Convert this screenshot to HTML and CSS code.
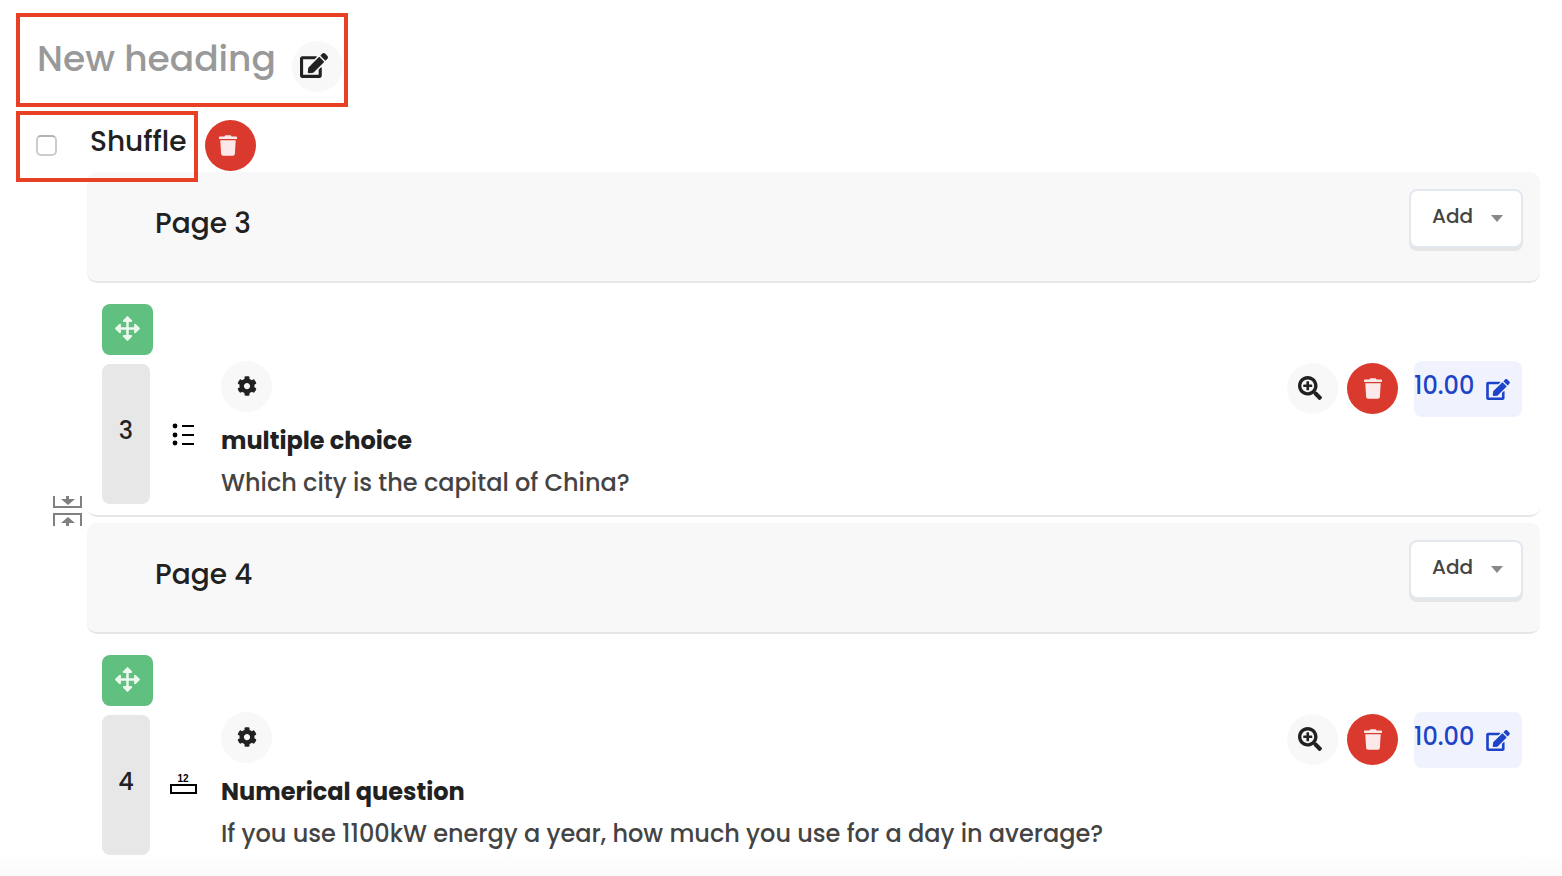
FILE: index.html
```html
<!DOCTYPE html>
<html lang="en">
  <head>
    <meta charset="UTF-8" />
    <meta name="viewport" content="width=device-width, initial-scale=1.0" />
    <title>Edit quiz</title>
    <link rel="stylesheet" href="styles.css">
  </head>
  <body>
    <!-- icon set -->
    <svg class="sprite" aria-hidden="true">
      <symbol id="edit" viewBox="0 0 576 512">
        <path d="M402.6 83.2l90.2 90.2c3.8 3.8 3.8 10 0 13.8L274.4 405.6l-92.8 10.3c-12.4 1.4-22.9-9.1-21.5-21.5l10.3-92.8L388.8 83.2c3.8-3.8 10-3.8 13.8 0zm162-22.9l-48.8-48.8c-15.2-15.2-39.9-15.2-55.2 0l-35.4 35.4c-3.8 3.8-3.8 10 0 13.8l90.2 90.2c3.8 3.8 10 3.8 13.8 0l35.4-35.4c15.2-15.3 15.2-40 0-55.2zM384 346.2V448H64V128h229.8c3.2 0 6.2-1.3 8.5-3.5l40-40c7.6-7.6 2.2-20.5-8.5-20.5H48C21.5 64 0 85.5 0 112v352c0 26.5 21.5 48 48 48h352c26.5 0 48-21.5 48-48V306.2c0-10.7-12.9-16-20.5-8.5l-40 40c-2.2 2.3-3.5 5.3-3.5 8.5z" />
      </symbol>
      <symbol id="zoom" viewBox="0 0 512 512">
        <path d="M304 192v32c0 6.6-5.4 12-12 12h-56v56c0 6.6-5.4 12-12 12h-32c-6.6 0-12-5.4-12-12v-56h-56c-6.6 0-12-5.4-12-12v-32c0-6.6 5.4-12 12-12h56v-56c0-6.6 5.4-12 12-12h32c6.6 0 12 5.4 12 12v56h56c6.6 0 12 5.4 12 12zm201 284.7L476.7 505c-9.4 9.4-24.6 9.4-33.9 0L343 405.3c-4.5-4.5-7-10.6-7-17V372c-35.3 27.6-79.7 44-128 44C93.1 416 0 322.9 0 208S93.1 0 208 0s208 93.1 208 208c0 48.3-16.4 92.7-44 128h16.3c6.4 0 12.5 2.5 17 7l99.7 99.7c9.3 9.4 9.3 24.6 0 34zM344 208c0-75.2-60.8-136-136-136S72 132.8 72 208s60.8 136 136 136 136-60.8 136-136z" />
      </symbol>
      <symbol id="trash" viewBox="0 0 448 512">
        <path d="M432 32H312l-9.4-18.7A24 24 0 0 0 281.1 0H166.8a23.72 23.72 0 0 0-21.4 13.3L136 32H16A16 16 0 0 0 0 48v32a16 16 0 0 0 16 16h416a16 16 0 0 0 16-16V48a16 16 0 0 0-16-16zM53.2 467a48 48 0 0 0 47.9 45h245.8a48 48 0 0 0 47.9-45L416 128H32z" />
      </symbol>
      <symbol id="cog" viewBox="0 0 512 512">
        <path d="M487.4 315.7l-42.6-24.6c4.3-23.2 4.3-47 0-70.2l42.6-24.6c4.9-2.8 7.1-8.6 5.5-14-11.1-35.6-30-67.8-54.7-94.6-3.8-4.1-10-5.1-14.8-2.3L380.8 110c-17.9-15.4-38.5-27.3-60.8-35.1V25.8c0-5.6-3.9-10.5-9.4-11.7-36.7-8.2-74.3-7.8-109.2 0-5.5 1.2-9.4 6.1-9.4 11.7V75c-22.2 7.9-42.8 19.8-60.8 35.1L88.7 85.5c-4.9-2.8-11-1.9-14.8 2.3-24.7 26.7-43.6 58.9-54.7 94.6-1.7 5.4.6 11.2 5.5 14L67.3 221c-4.3 23.2-4.3 47 0 70.2l-42.6 24.6c-4.9 2.8-7.1 8.6-5.5 14 11.1 35.6 30 67.8 54.7 94.6 3.8 4.1 10 5.1 14.8 2.3l42.6-24.6c17.9 15.4 38.5 27.3 60.8 35.1v49.2c0 5.6 3.9 10.5 9.4 11.7 36.7 8.2 74.3 7.8 109.2 0 5.5-1.2 9.4-6.1 9.4-11.7v-49.2c22.2-7.9 42.8-19.8 60.8-35.1l42.6 24.6c4.9 2.8 11 1.9 14.8-2.3 24.7-26.7 43.6-58.9 54.7-94.6 1.5-5.5-.7-11.3-5.6-14.1zM256 336c-44.1 0-80-35.9-80-80s35.9-80 80-80 80 35.9 80 80-35.9 80-80 80z" />
      </symbol>
      <symbol id="move" viewBox="0 0 24 24">
        <path d="M12 3v18M3 12h18" fill="none" stroke="currentColor" stroke-width="2.4" />
        <path d="M12 1l3.6 3.8H8.4zM12 23l3.6-3.8H8.4zM1 12l3.8-3.6v7.2zM23 12l-3.8-3.6v7.2z" stroke="currentColor" stroke-width="1.8" stroke-linejoin="round" />
      </symbol>
    </svg>

    <main>
      <div class="heading marked">
        <h1>New heading</h1>
        <button class="round" aria-label="Edit heading"><svg width="28" height="25"><use href="#edit" /></svg></button>
      </div>

      <div class="shuffle-row">
        <div class="shuffle marked">
          <input type="checkbox" id="shuffle" />
          <label for="shuffle">Shuffle</label>
        </div>
        <button class="round red" aria-label="Delete heading"><svg width="18" height="21"><use href="#trash" /></svg></button>
      </div>

      <div class="pages">
        <div class="page-header">
          <h2>Page 3</h2>
          <button class="add">Add <span class="caret"></span></button>
        </div>
        <div class="question">
          <div class="side">
            <button class="move" aria-label="Move question"><svg width="25" height="25"><use href="#move" /></svg></button>
            <div class="number">3</div>
          </div>
          <svg class="type" width="27" height="24" viewBox="0 0 27 24">
            <path d="M12 4h12M12 13h12M12 22h12" stroke="#000" stroke-width="2" />
            <g><circle cx="5" cy="4" r="2.4" /><circle cx="5" cy="13" r="2.4" /><circle cx="5" cy="21" r="2.4" /></g>
          </svg>
          <div class="content">
            <button class="round" aria-label="Question settings"><svg width="20" height="20"><use href="#cog" /></svg></button>
            <h3>multiple choice</h3>
            <p>Which city is the capital of China?</p>
          </div>
          <div class="actions">
            <button class="round zoom" aria-label="Preview question"><svg width="24" height="24"><use href="#zoom" /></svg></button>
            <button class="round red" aria-label="Delete question"><svg width="18" height="21"><use href="#trash" /></svg></button>
            <button class="marks" aria-label="Edit mark 10.00"><span>10.00</span><svg width="24" height="21"><use href="#edit" /></svg></button>
          </div>
          <button class="join" aria-label="Remove page break">
            <svg width="30" height="32" viewBox="0 0 30 32">
              <path d="M1 1v11h27V1M1 31V19h27v12" fill="none" stroke="#808080" stroke-width="2" />
              <path d="M13 1h3v3h6l-7 6-7-6h5zM13 31h3v-3h6l-7-6-7 6h5z" fill="#808080" />
            </svg>
          </button>
        </div>

        <div class="page-header">
          <h2>Page 4</h2>
          <button class="add">Add <span class="caret"></span></button>
        </div>
        <div class="question last">
          <div class="side">
            <button class="move" aria-label="Move question"><svg width="25" height="25"><use href="#move" /></svg></button>
            <div class="number">4</div>
          </div>
          <svg class="type" width="27" height="24" viewBox="0 0 27 24">
            <rect x="1" y="12" width="25" height="8" fill="#fff" stroke="#000" stroke-width="2" />
            <text x="13" y="9" text-anchor="middle">12</text>
          </svg>
          <div class="content">
            <button class="round" aria-label="Question settings"><svg width="20" height="20"><use href="#cog" /></svg></button>
            <h3>Numerical question</h3>
            <p>If you use 1100kW energy a year, how much you use for a day in average?</p>
          </div>
          <div class="actions">
            <button class="round zoom" aria-label="Preview question"><svg width="24" height="24"><use href="#zoom" /></svg></button>
            <button class="round red" aria-label="Delete question"><svg width="18" height="21"><use href="#trash" /></svg></button>
            <button class="marks" aria-label="Edit mark 10.00"><span>10.00</span><svg width="24" height="21"><use href="#edit" /></svg></button>
          </div>
        </div>
      </div>
    </main>
  </body>
</html>
```
FILE: styles.css
```css
* {
  margin: 0;
  padding: 0;
  box-sizing: border-box;
}
body {
  min-height: 100vh;
  font-family: Poppins, Inter, sans-serif;
  font-weight: 500;
  color: #212121;
  background: linear-gradient(to top, #fafafa, #fff 24px);
}
main {
  padding: 13px 22px 8px 16px;
}
.sprite {
  position: absolute;
  width: 0;
  height: 0;
}
svg {
  display: block;
  fill: currentColor;
}
h1,
h2 {
  font-weight: 500;
}
button {
  font: inherit;
  color: inherit;
  border: none;
  background: none;
  cursor: pointer;
}
.marked {
  border: 4px solid #e84025;
}

.round {
  display: flex;
  flex-shrink: 0;
  align-items: center;
  justify-content: center;
  width: 51px;
  height: 51px;
  padding-bottom: 1px;
  border-radius: 50%;
  background: #f8f8f8;
}
.round.red {
  background: #da392d;
  color: #fbe9e9;
}
.round.zoom {
  padding: 0 6px 2px 0;
}

.heading {
  display: flex;
  align-items: center;
  justify-content: space-between;
  width: 332px;
  height: 94px;
  padding: 12px 1px 0 17px;
}
.heading h1 {
  padding-bottom: 14px;
  font-size: 36px;
  line-height: 48px;
  color: #999;
  white-space: nowrap;
}
.heading .round {
  padding: 0 7px 2px 0;
}

.shuffle-row {
  position: relative;
  display: flex;
  gap: 7px;
  margin: 4px 0 -10px;
}
.shuffle-row .red {
  margin-top: 9px;
  padding-right: 6px;
}
.shuffle {
  display: flex;
  align-items: center;
  width: 182px;
  height: 71px;
  padding: 0 0 2px 16px;
}
.shuffle input {
  appearance: none;
  width: 21px;
  height: 21px;
  border: 2px solid #ccc;
  border-top-color: #b3b3b3;
  border-radius: 5px;
  background: #fff;
}
.shuffle label {
  padding: 0 0 8px 33px;
  font-size: 28px;
  line-height: 36px;
}

.pages {
  display: flex;
  flex-direction: column;
  gap: 6px;
  margin-left: 71px;
}
.page-header {
  display: flex;
  justify-content: space-between;
  height: 111px;
  padding: 17px 17px 0 68px;
  border-bottom: 2px solid #e6e6e6;
  border-radius: 10px;
  background: #f8f8f8;
}
.page-header h2 {
  padding-top: 17px;
  font-size: 28px;
  line-height: 36px;
}
.add {
  display: flex;
  align-items: center;
  justify-content: space-between;
  width: 114px;
  height: 59px;
  padding: 0 18px 5px 21px;
  border: 2px solid #e3e7ee;
  border-radius: 8px;
  background: #fff;
  box-shadow: 0 3px 0 #e6e6e6;
  font-size: 20px;
  color: #444;
}
.caret {
  margin-top: 5px;
  border: 6px solid transparent;
  border-top: 7px solid #888;
  border-bottom: none;
}

.question {
  position: relative;
  display: flex;
  height: 228px;
  padding: 15px 18px 0 15px;
  border-bottom: 2px solid #e6e6e6;
  border-radius: 10px;
}
.question.last {
  border-bottom: none;
}
.side {
  display: flex;
  flex-direction: column;
  gap: 9px;
}
.move {
  display: flex;
  align-items: center;
  justify-content: center;
  width: 51px;
  height: 51px;
  padding-bottom: 2px;
  border-radius: 8px;
  background: #60c080;
  color: #ebf8ef;
}
.number {
  width: 48px;
  height: 140px;
  border-radius: 8px;
  background: #e7e7e7;
  font-size: 24px;
  line-height: 134px;
  text-align: center;
}
.type {
  flex-shrink: 0;
  margin: 118px 24px 0 17px;
  color: #000;
}
.type text {
  font: bold 10px "Liberation Sans", sans-serif;
}
.content {
  flex: 1;
  padding-top: 57px;
}
.content h3 {
  margin: 11px 0 6px;
  font-size: 24px;
  font-weight: 700;
  line-height: 36px;
}
.content p {
  font-size: 24px;
  line-height: 36px;
  color: #444;
}
.actions {
  display: flex;
  align-items: flex-start;
  gap: 9px;
  margin-top: 57px;
}
.actions .round {
  margin-top: 2px;
}
.marks {
  display: flex;
  align-items: center;
  justify-content: space-between;
  width: 108px;
  height: 56px;
  margin-left: 7px;
  padding-right: 12px;
  border-radius: 8px;
  background: #f0f3fd;
  color: #1d43c9;
  font-size: 24px;
}
.marks span {
  padding-bottom: 7px;
}

/* sits in the gutter between two pages */
.join {
  position: absolute;
  left: -34px;
  bottom: -12px;
}
```
